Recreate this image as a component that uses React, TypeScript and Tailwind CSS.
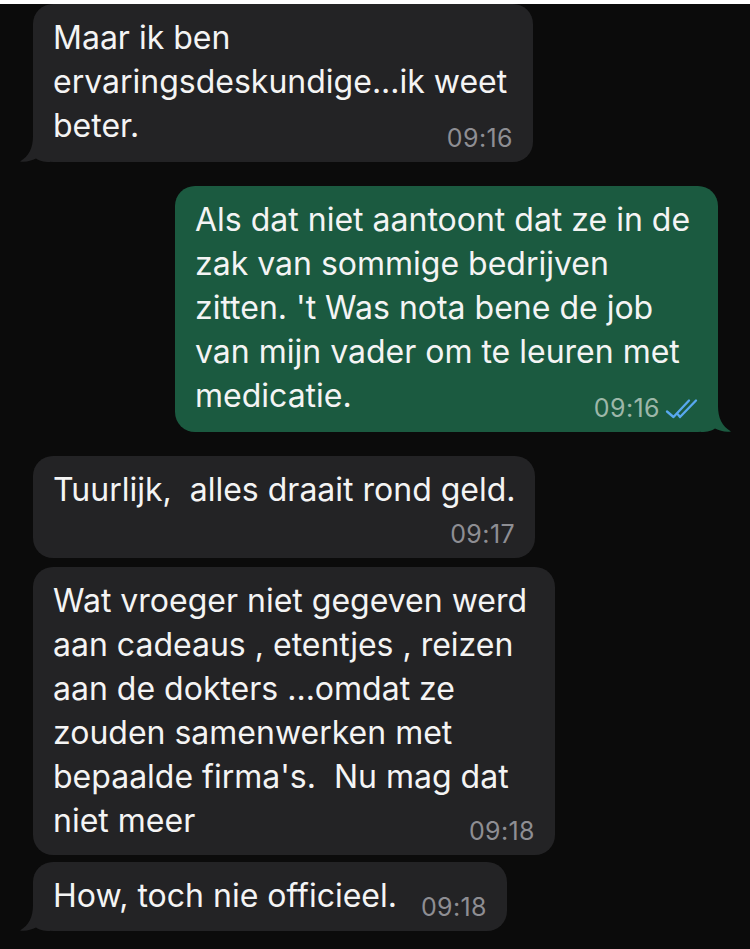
import React from "react";

type Msg = {
  out?: boolean;
  lines: string[];
  time: string;
  tail?: boolean;
  width: string;
  pb: string;
  gap: string;
};

const messages: Msg[] = [
  {
    lines: ["Maar ik ben", "ervaringsdeskundige...ik weet", "beter."],
    time: "09:16",
    tail: true,
    width: "w-[500px]",
    pb: "pb-[14px]",
    gap: "mt-1",
  },
  {
    out: true,
    lines: [
      "Als dat niet aantoont dat ze in de",
      "zak van sommige bedrijven",
      "zitten. 't Was nota bene de job",
      "van mijn vader om te leuren met",
      "medicatie.",
    ],
    time: "09:16",
    tail: true,
    width: "w-[543px]",
    pb: "pb-[14px]",
    gap: "mt-6",
  },
  {
    lines: ["Tuurlijk,  alles draait rond geld."],
    time: "09:17",
    width: "w-[502px]",
    pb: "pb-[46px]",
    gap: "mt-6",
  },
  {
    lines: [
      "Wat vroeger niet gegeven werd",
      "aan cadeaus , etentjes , reizen",
      "aan de dokters ...omdat ze",
      "zouden samenwerken met",
      "bepaalde firma's.  Nu mag dat",
      "niet meer",
    ],
    time: "09:18",
    width: "w-[522px]",
    pb: "pb-[12px]",
    gap: "mt-[9px]",
  },
  {
    lines: ["How, toch nie officieel."],
    time: "09:18",
    tail: true,
    width: "w-[474px]",
    pb: "pb-[13px]",
    gap: "mt-[7px]",
  },
];

function Tail({ out, color }: { out?: boolean; color: string }) {
  return (
    <svg
      width="30"
      height="26"
      viewBox="0 0 30 26"
      className={
        out
          ? "absolute bottom-0 right-[-13px] -scale-x-100"
          : "absolute bottom-0 left-[-13px]"
      }
    >
      <path
        d="M13 0 C13 12 9 20 0 25.5 C6 26.3 11 25 16 22.5 C19 24.6 23 26 30 26 L30 0 Z"
        fill={color}
      />
    </svg>
  );
}

function Ticks() {
  return (
    <svg width="33" height="21" viewBox="0 0 33 21" fill="none" className="ml-[5px]">
      <path d="M2 13.5 L8.5 19 L24 2.5" stroke="#58a8ef" strokeWidth="2.3" strokeLinecap="round" strokeLinejoin="round" />
      <path d="M13 16.5 L15 19 L31 2.5" stroke="#58a8ef" strokeWidth="2.3" strokeLinecap="round" strokeLinejoin="round" />
    </svg>
  );
}

function Bubble({ m }: { m: Msg }) {
  const color = m.out ? "#1b5a40" : "#232325";
  return (
    <div className={`flex ${m.out ? "justify-end pr-[32px]" : "pl-[33px]"} ${m.gap}`}>
      <div
        className={`relative ${m.width} rounded-[20px] pl-5 pr-5 pt-3 ${m.pb} ${
          m.out ? "bg-[#1b5a40]" : "bg-[#232325]"
        }`}
      >
        {m.tail && <Tail out={m.out} color={color} />}
        <div className="relative text-[32px] leading-[44px] tracking-[0px] text-[#f4f4f4]">
          {m.lines.map((l, i) => (
            <div key={i} className="whitespace-pre">
              {l}
            </div>
          ))}
        </div>
        <div
          className={`absolute bottom-[10px] right-[20px] flex items-center text-[25px] leading-[28px] tracking-[0.4px] ${
            m.out ? "text-[#9db7a9]" : "text-[#8e8e93]"
          }`}
        >
          <span>{m.time}</span>
          {m.out && <Ticks />}
        </div>
      </div>
    </div>
  );
}

export default function App() {
  return (
    <div
      className="min-h-screen bg-[#0b0b0b]"
      style={{ fontFamily: "Inter, 'Noto Sans', sans-serif" }}
    >
      {messages.map((m, i) => (
        <Bubble key={i} m={m} />
      ))}
    </div>
  );
}
